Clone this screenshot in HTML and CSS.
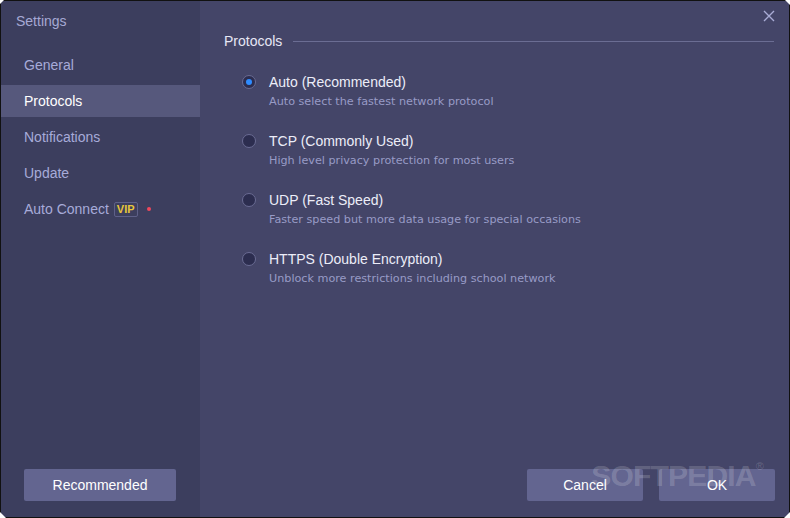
FILE: index.html
```html
<!DOCTYPE html>
<html lang="en">
<head>
    <meta charset="utf-8">
    <title>Settings</title>
    <link rel="stylesheet" href="styles.css">
</head>
<body>
    <div class="window">
        <div class="sidebar">
            <div class="title">Settings</div>
            <ul class="nav">
                <li>General</li>
                <li class="active">Protocols</li>
                <li>Notifications</li>
                <li>Update</li>
                <li>Auto Connect <span class="vip">VIP</span> <span class="dot"></span></li>
            </ul>
            <div class="side-footer">
                <button class="btn wide">Recommended</button>
            </div>
        </div>

        <div class="main">
            <span class="close">
                <svg width="12" height="12" viewBox="0 0 12 12"><path d="M1 1L11 11M11 1L1 11" stroke="#a9acd6" stroke-width="1.4" fill="none"/></svg>
            </span>
            <div class="section-head">
                <span>Protocols</span>
                <div class="rule"></div>
            </div>

            <div class="options">
                <div class="option checked">
                    <span class="radio"></span>
                    <div>
                        <div class="opt-title">Auto (Recommended)</div>
                        <div class="opt-desc">Auto select the fastest network protocol</div>
                    </div>
                </div>
                <div class="option">
                    <span class="radio"></span>
                    <div>
                        <div class="opt-title">TCP (Commonly Used)</div>
                        <div class="opt-desc">High level privacy protection for most users</div>
                    </div>
                </div>
                <div class="option">
                    <span class="radio"></span>
                    <div>
                        <div class="opt-title">UDP (Fast Speed)</div>
                        <div class="opt-desc">Faster speed but more data usage for special occasions</div>
                    </div>
                </div>
                <div class="option">
                    <span class="radio"></span>
                    <div>
                        <div class="opt-title">HTTPS (Double Encryption)</div>
                        <div class="opt-desc">Unblock more restrictions including school network</div>
                    </div>
                </div>
            </div>

            <div class="main-footer">
                <button class="btn">Cancel</button>
                <button class="btn">OK</button>
            </div>
            <div class="watermark">SOFTPEDIA<sup>&reg;</sup></div>
        </div>
    </div>
</body>
</html>
```

FILE: styles.css
```css
html, body {
    margin: 0;
    padding: 0;
    background: #ffffff;
}
body {
    font-family: "Liberation Sans", Arial, sans-serif;
    width: 790px;
    height: 518px;
    overflow: hidden;
}
.window {
    box-sizing: border-box;
    width: 790px;
    height: 518px;
    border: 1px solid #111111;
    display: flex;
    clip-path: polygon(4px 0, 785px 0, 790px 5px, 790px 512px, 784px 518px, 6px 518px, 0 512px, 0 4px);
}
.sidebar {
    width: 199px;
    background: #3c3e5e;
    display: flex;
    flex-direction: column;
}
.title {
    color: #a6a9d4;
    font-size: 14px;
    line-height: 18px;
    padding: 11px 15px 0;
}
.nav {
    list-style: none;
    margin: 19px 0 0;
    padding: 0;
    display: flex;
    flex-direction: column;
    gap: 4px;
}
.nav li {
    height: 32px;
    line-height: 32px;
    padding-left: 23px;
    font-size: 14px;
    color: #a7abd9;
    display: flex;
    align-items: center;
}
.nav li.active {
    background: #56587c;
    color: #ffffff;
}
.vip {
    display: inline-block;
    font-size: 11px;
    font-weight: bold;
    line-height: 13px;
    color: #e8c63a;
    border: 1px solid #5e6088;
    border-radius: 2px;
    padding: 0 2px;
    margin-left: 5px;
}
.dot {
    width: 4px;
    height: 4px;
    border-radius: 50%;
    background: #f0475c;
    margin-left: 9px;
}
.side-footer {
    margin-top: auto;
    padding: 0 23px 16px;
}
.btn {
    height: 32px;
    width: 116px;
    background: #636590;
    color: #ffffff;
    border: none;
    border-radius: 2px;
    font-family: "Liberation Sans", Arial, sans-serif;
    font-size: 14px;
    cursor: pointer;
}
.btn.wide {
    width: 152px;
}
.main {
    flex: 1;
    background: #444568;
    display: flex;
    flex-direction: column;
    position: relative;
}
.close {
    position: absolute;
    top: 9px;
    right: 14px;
    line-height: 0;
}
.section-head {
    display: flex;
    align-items: center;
    padding: 31px 15px 0 24px;
    font-size: 14px;
    line-height: 18px;
    color: #e6e7f5;
}
.rule {
    flex: 1;
    height: 1px;
    background: #6b6d93;
    margin-left: 11px;
}
.options {
    margin-top: 23px;
    padding-left: 42px;
    display: flex;
    flex-direction: column;
    gap: 22px;
}
.option {
    display: flex;
    align-items: flex-start;
}
.radio {
    box-sizing: border-box;
    width: 14px;
    height: 14px;
    border-radius: 50%;
    border: 1px solid #6a6c93;
    background: #2c2d4f;
    margin-top: 2px;
    margin-right: 13px;
    display: flex;
    align-items: center;
    justify-content: center;
}
.option.checked .radio::after {
    content: "";
    width: 6px;
    height: 6px;
    border-radius: 50%;
    background: #2f8cff;
}
.opt-title {
    font-size: 14px;
    line-height: 18px;
    color: #ecedf8;
}
.opt-desc {
    margin-top: 3px;
    font-family: "DejaVu Sans", Verdana, sans-serif;
    font-size: 11.2px;
    line-height: 16px;
    color: #989bc6;
}
.main-footer {
    margin-top: auto;
    display: flex;
    justify-content: flex-end;
    gap: 16px;
    padding: 0 14px 16px;
}
.watermark {
    position: absolute;
    right: 26px;
    bottom: 24px;
    font-family: "Liberation Sans", Arial, sans-serif;
    font-weight: bold;
    font-size: 30px;
    letter-spacing: -0.8px;
    color: rgba(255, 255, 255, 0.18);
    pointer-events: none;
}
.watermark sup {
    font-size: 11px;
    font-weight: normal;
    vertical-align: 16px;
}
```
